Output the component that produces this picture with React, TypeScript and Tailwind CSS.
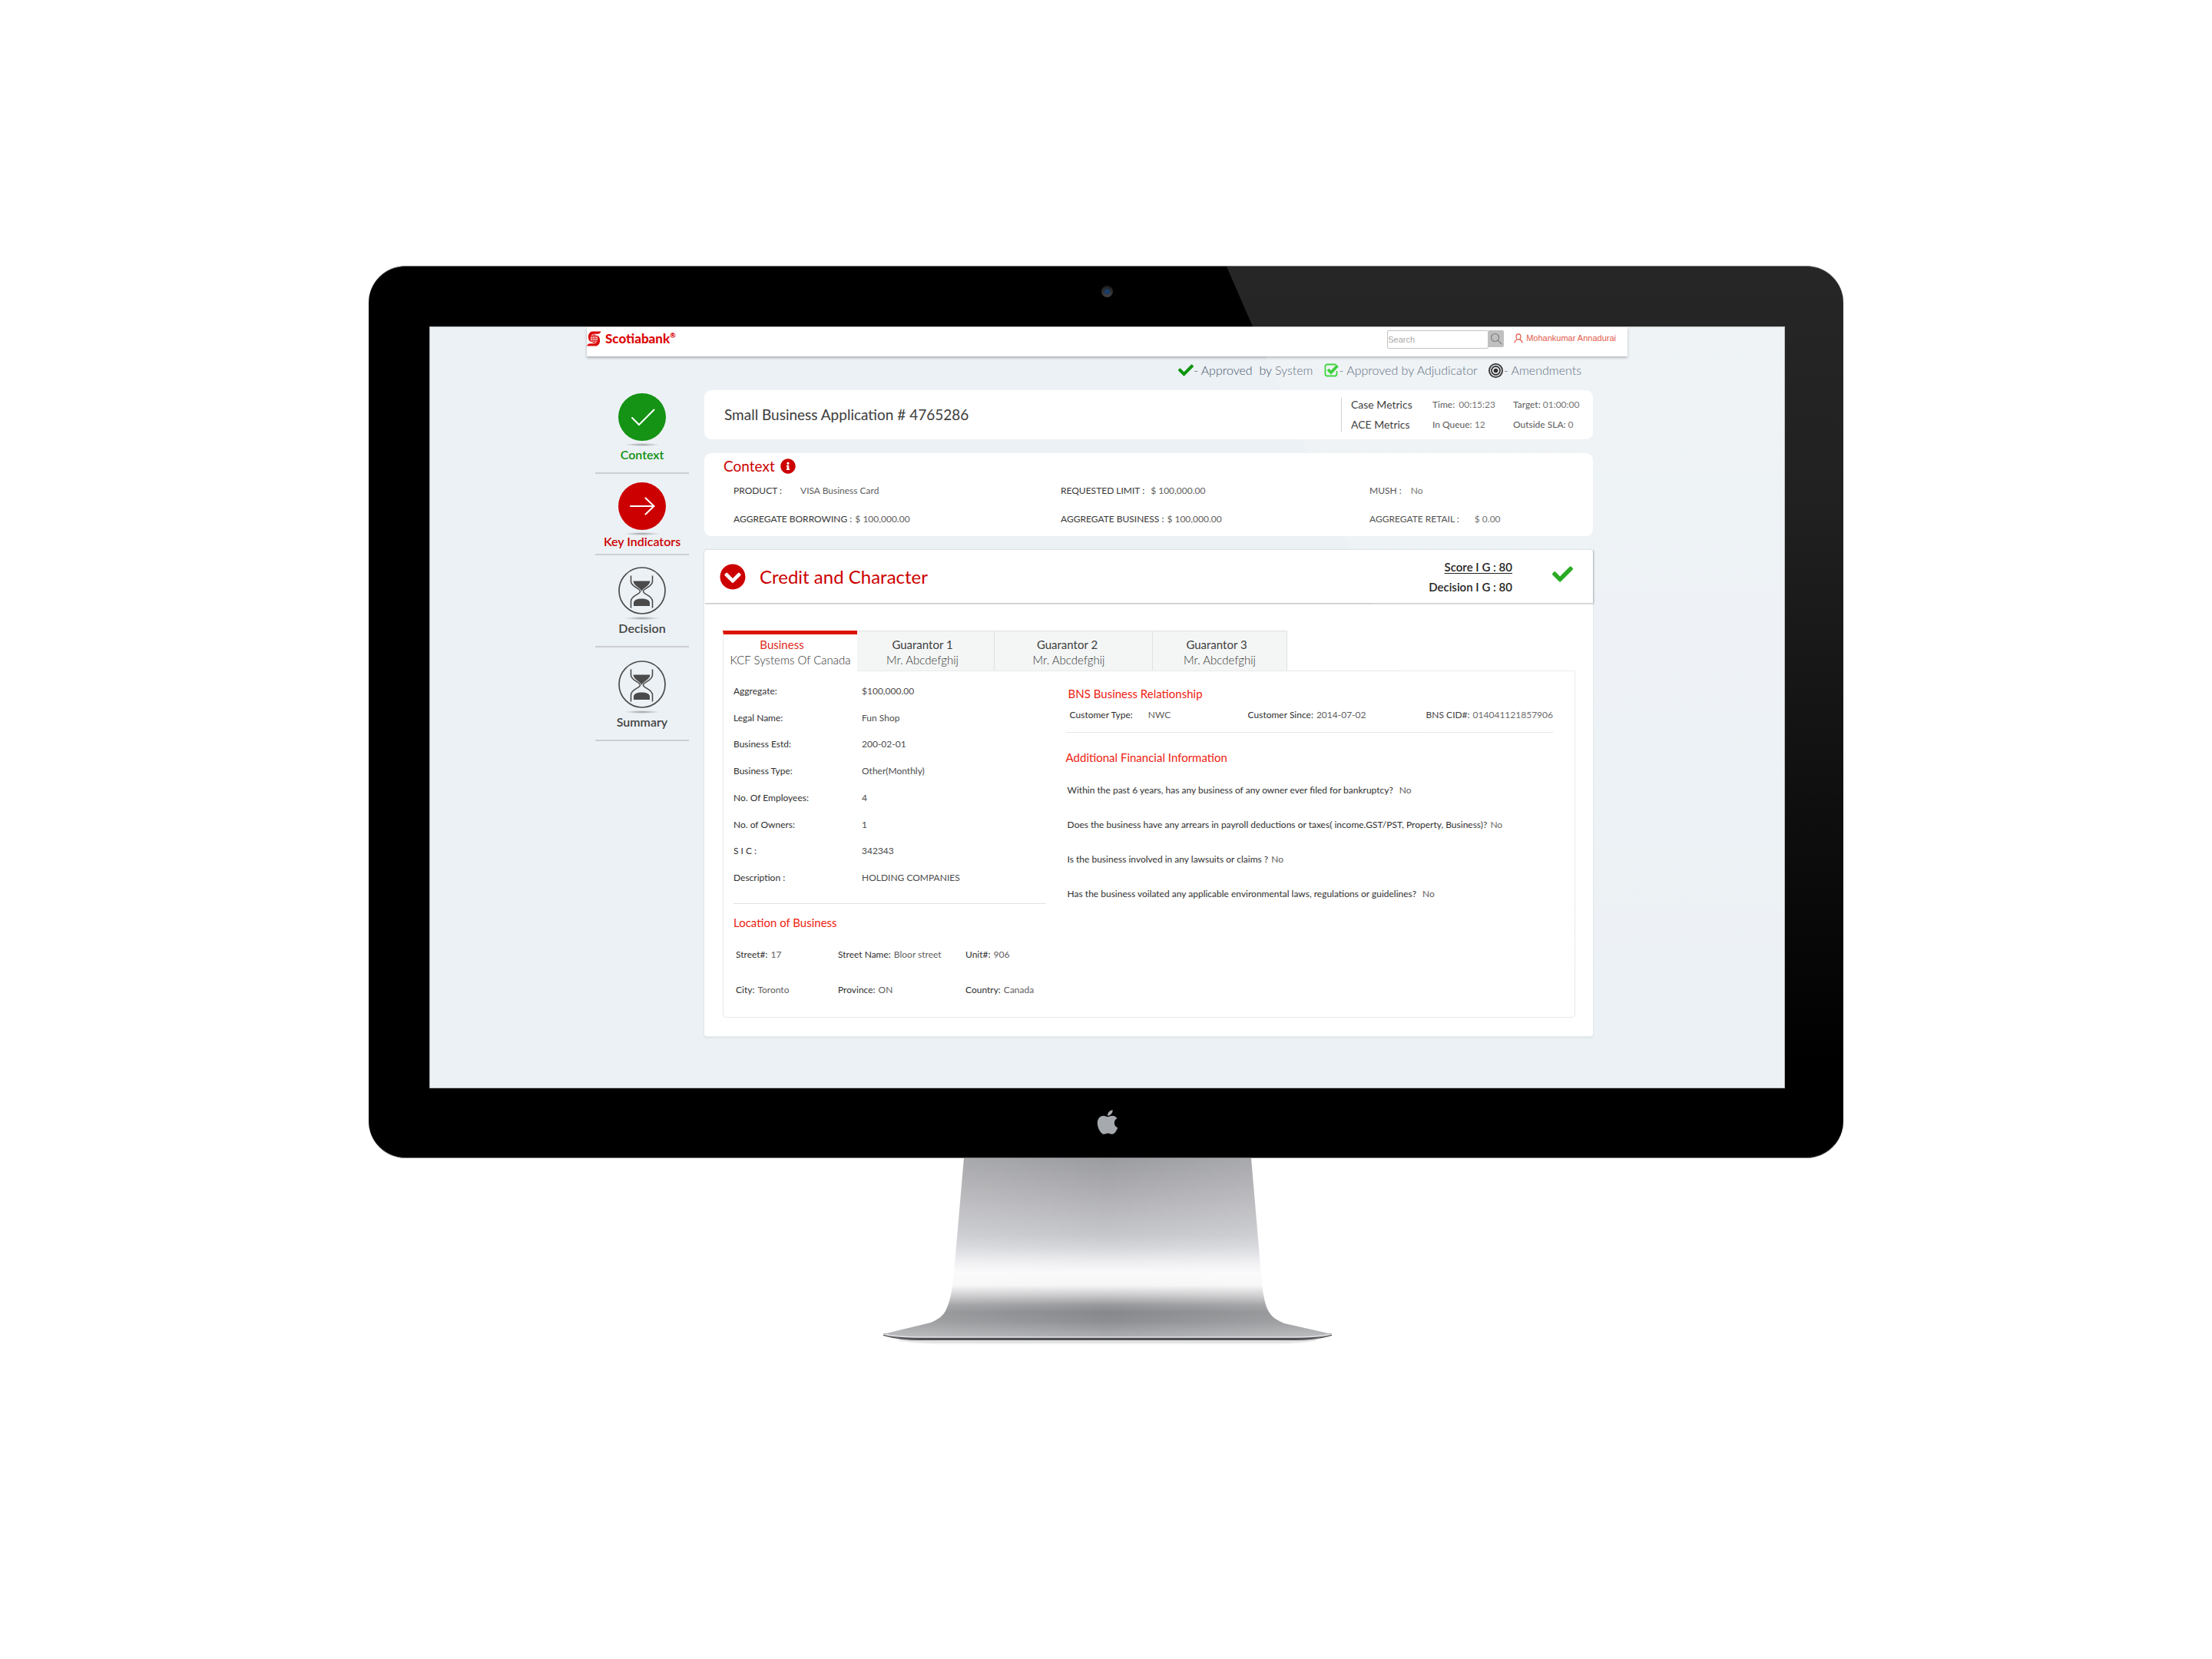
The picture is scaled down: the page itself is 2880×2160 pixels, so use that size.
import type { ReactNode } from "react";
import { FaApple, FaCheck, FaInfoCircle, FaChevronCircleDown } from "react-icons/fa";

type Pair = { label: string; value: string; gap?: string };

const applicationFacts: Pair[] = [
  { label: "PRODUCT :", value: "VISA Business Card", gap: "gap-6" },
  { label: "REQUESTED LIMIT :", value: "$ 100,000.00", gap: "gap-2" },
  { label: "MUSH :", value: "No", gap: "gap-3" },
  { label: "AGGREGATE BORROWING :", value: "$ 100,000.00", gap: "gap-1" },
  { label: "AGGREGATE BUSINESS :", value: "$ 100,000.00", gap: "gap-1" },
  { label: "AGGREGATE RETAIL :", value: "$ 0.00", gap: "gap-5" },
];

const businessFacts: Pair[] = [
  { label: "Aggregate:", value: "$100,000.00" },
  { label: "Legal Name:", value: "Fun Shop" },
  { label: "Business Estd:", value: "200-02-01" },
  { label: "Business Type:", value: "Other(Monthly)" },
  { label: "No. Of Employees:", value: "4" },
  { label: "No. of Owners:", value: "1" },
  { label: "S I C :", value: "342343" },
  { label: "Description :", value: "HOLDING COMPANIES" },
];

const locationFacts: Pair[] = [
  { label: "Street#:", value: "17" },
  { label: "Street Name:", value: "Bloor street" },
  { label: "Unit#:", value: "906" },
  { label: "City:", value: "Toronto" },
  { label: "Province:", value: "ON" },
  { label: "Country:", value: "Canada" },
];

const relationshipFacts: Pair[] = [
  { label: "Customer Type:", value: "NWC", gap: "gap-5" },
  { label: "Customer Since:", value: "2014-07-02", gap: "gap-1" },
  { label: "BNS CID#:", value: "014041121857906", gap: "gap-1" },
];

const questions: Pair[] = [
  { label: "Within the past 6 years, has any business of any owner ever filed for bankruptcy?", value: "No", gap: "gap-2" },
  { label: "Does the business have any arrears in payroll deductions or taxes( income.GST/PST, Property, Business)?", value: "No", gap: "gap-1" },
  { label: "Is the business involved in any lawsuits or claims ?", value: "No", gap: "gap-1" },
  { label: "Has the business voilated any applicable environmental laws, regulations or guidelines?", value: "No", gap: "gap-2" },
];

const tabs = [
  { title: "Business", name: "KCF Systems Of Canada", width: "w-[175px]", titleInset: "pr-[22px]" },
  { title: "Guarantor 1", name: "Mr. Abcdefghij", width: "w-[179px] pr-2", titleInset: "" },
  { title: "Guarantor 2", name: "Mr. Abcdefghij", width: "w-[206px] pr-3", titleInset: "pr-1" },
  { title: "Guarantor 3", name: "Mr. Abcdefghij", width: "w-[175px]", titleInset: "pr-2" },
];

function Fact({ label, value, gap = "gap-1" }: Pair) {
  return (
    <div className={`flex whitespace-nowrap ${gap}`}>
      <dt>{label}</dt>
      <dd className="text-[#5e5e5e]">{value}</dd>
    </div>
  );
}

function BrandMark() {
  return (
    <svg viewBox="0 0 40 42" className="h-5 w-[19px]" aria-hidden="true">
      <path d="M16 1 H39 C37 6 34 8 30 8 H19 C14 9 11 13 10 18 C9 23 10 27 13 30 C7 28 4 23 4 16 C4 8 9 1 16 1Z" fill="#dc0a0a" />
      <path d="M24 41 H0 C2 36 5 34 9 34 H21 C26 33 29 29 30 24 C31 18 30 14 27 11 C33 13 36 18 36 26 C36 34 31 41 24 41Z" fill="#dc0a0a" />
      <g fill="none" stroke="#dc0a0a" strokeWidth="1.8">
        <circle cx="20" cy="21" r="10.5" />
        <ellipse cx="20" cy="21" rx="5" ry="10.5" />
        <path d="M20 10V32M9.500 21H30.500M11 15.500H29M11 26.500H29" />
      </g>
    </svg>
  );
}

function Hourglass() {
  return (
    <svg viewBox="0 0 62 62" className="size-[62px]" aria-hidden="true">
      <circle cx="31" cy="31" r="30" fill="none" stroke="#4b4b4b" strokeWidth="1.7" />
      <g fill="none" stroke="#4b4b4b" strokeWidth="1.6">
        <path d="M16.500 11.500V19C16.500 26 28.500 28 28.500 32C28.500 36 16.500 37 16.500 45V53.500" />
        <path d="M44.500 11.500V19C44.500 26 32.500 28 32.500 32C32.500 36 44.500 37 44.500 45V53.500" />
      </g>
      <path d="M19.500 18.500H41.500C41 25 32.500 27 30.500 32C28.500 27 20 25 19.500 18.500Z" fill="#4b4b4b" />
      <path d="M20 51V47C20 43 25 41.500 30.500 41.500C36 41.500 41 43 41 47V51Z" fill="#4b4b4b" />
    </svg>
  );
}

function StepDisc({ color, children }: { color: string; children: ReactNode }) {
  return (
    <svg viewBox="0 0 62 62" className="size-[62px]" fill="none" stroke="#fff" strokeWidth="2" strokeLinecap="round" aria-hidden="true">
      <circle cx="31" cy="31" r="31" fill={color} stroke="none" />
      {children}
    </svg>
  );
}

const steps = [
  {
    name: "Context",
    tone: "text-[#109010]",
    spacing: "pb-[13px]",
    labelGap: "mt-2",
    icon: <StepDisc color="#149314"><path d="M18 32L27 41L46.500 21.500" /></StepDisc>,
  },
  {
    name: "Key Indicators",
    tone: "text-[#cc0000]",
    spacing: "pt-[11px] pb-1.5",
    labelGap: "mt-[5px]",
    icon: <StepDisc color="#cc0000"><path d="M16 31H46M35.500 20.500L46.500 31L35.500 41.500" /></StepDisc>,
  },
  { name: "Decision", tone: "text-[#444]", spacing: "pt-[15px] pb-[13px]", labelGap: "mt-2", icon: <Hourglass /> },
  { name: "Summary", tone: "text-[#444]", spacing: "pt-[17px] pb-[13px]", labelGap: "mt-2", icon: <Hourglass /> },
];

function Sidebar() {
  return (
    <nav aria-label="Steps" className="w-[122px] shrink-0 pt-12">
      {steps.map((s) => (
        <a key={s.name} href="#" className={`flex flex-col items-center border-b-2 border-[#cdcfd1] ${s.spacing} ${s.tone}`}>
          <span className="relative flex">
            {s.icon}
            <span className="absolute inset-x-2 top-full mt-[3px] h-1 rounded-full bg-[radial-gradient(closest-side,#9a9ea2,transparent)]" />
          </span>
          <span className={`text-base leading-5 font-semibold ${s.labelGap}`}>{s.name}</span>
        </a>
      ))}
    </nav>
  );
}

function TopBar() {
  return (
    <header className="relative flex h-[38px] items-start justify-between bg-white pr-[15px] shadow-[0_2px_3px_rgba(90,95,105,0.45)]">
      <a href="#" className="flex items-center gap-[5px] pt-[5px] text-[17px] leading-5 font-black text-[#dc0a0a]">
        <BrandMark />
        <span className="flex">
          Scotiabank<span className="text-[9px] leading-3">®</span>
        </span>
      </a>
      <div className="flex items-start pt-1 font-['Liberation_Sans',sans-serif] text-[11px]">
        <input
          type="search"
          aria-label="Search"
          placeholder="Search"
          className="h-6 w-[132px] rounded-[2px] border border-[#b9b9b9] bg-white placeholder:text-[#999]"
        />
        <button type="button" aria-label="Search" className="flex h-[22px] w-5 items-center justify-center rounded-r-[2px] bg-[#b5b5b5]">
          <svg viewBox="0 0 16 16" className="size-4" fill="none" stroke="#6c6c6c" strokeWidth="1.2" aria-hidden="true">
            <circle cx="6.500" cy="6.500" r="5" />
            <path d="M10.200 10.200L15 15" />
          </svg>
        </button>
        <a href="#" className="ml-[13px] flex items-center gap-1 text-[#dd3d2a]">
          <svg viewBox="0 0 12 13" className="h-[13px] w-3" fill="none" stroke="#dd3d2a" strokeWidth="1.2" aria-hidden="true">
            <ellipse cx="6" cy="4.500" rx="3" ry="3.700" />
            <path d="M1 12.500C1 10 2.500 8.800 4.400 8M11 12.500C11 10 9.500 8.800 7.600 8" />
          </svg>
          <span className="leading-5">Mohankumar Annadurai</span>
        </a>
      </div>
    </header>
  );
}

function Legend() {
  return (
    <ul className="mb-2 flex h-[36px] items-center justify-end gap-3.5 pr-[15px] text-base font-light whitespace-pre text-[#46546a]">
      <li className="flex items-center">
        <FaCheck className="size-5 text-[#0e960e]" aria-hidden="true" />
        {"- Approved  by System"}
      </li>
      <li className="flex items-center">
        <svg viewBox="0 0 20 18" className="h-[18px] w-5" fill="none" aria-hidden="true">
          <path d="M15.500 1.500H4A2.500 2.500 0 0 0 1.500 4V14A2.500 2.500 0 0 0 4 16.500H14A2.500 2.500 0 0 0 16.500 14V10" stroke="#1fd01f" strokeWidth="1.8" />
          <path d="M5 8L9 12L17.500 3" stroke="#1fc81f" strokeWidth="3.800" />
        </svg>
        - Approved by Adjudicator
      </li>
      <li className="flex items-center gap-px">
        <svg viewBox="0 0 20 20" className="size-[19px]" fill="none" stroke="#111" strokeWidth="1.900" aria-hidden="true">
          <circle cx="10" cy="10" r="9" />
          <circle cx="10" cy="10" r="5.800" />
          <circle cx="10" cy="10" r="3" fill="#111" stroke="none" />
        </svg>
        - Amendments
      </li>
    </ul>
  );
}

function ApplicationCard() {
  return (
    <section className="flex h-16 items-center justify-between rounded-[9px] bg-white pl-[26px]">
      <h1 className="text-[19px] text-[#3c3c3c]">Small Business Application # 4765286</h1>
      <div className="flex items-center">
        <div className="h-11 w-px bg-[#cacaca]" />
        <div className="grid grid-cols-[106px_105px_104px] pl-3 text-xs/[26px] whitespace-nowrap text-[#404040]">
          <h2 className="text-sm/[26px] text-[#222]">Case Metrics</h2>
          <p>Time: <span className="ml-0.5 text-[#5e5e5e]">00:15:23</span></p>
          <p>Target: <span className="text-[#5e5e5e]">01:00:00</span></p>
          <h2 className="text-sm/[26px] text-[#222]">ACE Metrics</h2>
          <p>In Queue: <span className="text-[#5e5e5e]">12</span></p>
          <p>Outside SLA: <span className="text-[#5e5e5e]">0</span></p>
        </div>
      </div>
    </section>
  );
}

function ContextCard() {
  return (
    <section className="mt-[18px] rounded-[9px] bg-white pt-[5px] pb-3">
      <h2 className="flex items-center gap-[7px] pl-[25px] text-[19px] leading-6 text-[#cc0000]">
        Context
        <FaInfoCircle className="size-5" aria-hidden="true" />
      </h2>
      <dl className="mt-2.5 grid grid-cols-[426fr_402fr_291fr] gap-y-[17px] pl-[38px] text-xs leading-5 text-[#383838]">
        {applicationFacts.map((f) => (
          <Fact key={f.label} {...f} />
        ))}
      </dl>
    </section>
  );
}

function CreditCard() {
  return (
    <section className="mt-[18px] rounded-sm border-b-2 border-[#e2ebec] bg-white shadow-[0_0_2px_rgba(120,140,150,0.35)]">
      <header className="flex h-[69px] items-center gap-[18px] pr-[26px] pl-5 shadow-[1px_1px_2px_rgba(90,95,100,0.5)]">
        <button type="button" aria-label="Collapse section" className="flex text-[#cc0000]">
          <FaChevronCircleDown className="size-[34px]" aria-hidden="true" />
        </button>
        <h2 className="text-2xl text-[#cc0000]">Credit and Character</h2>
        <div className="ml-auto text-right text-[15px] leading-[26px] font-semibold text-[#060606]">
          <p><a href="#" className="underline underline-offset-2">Score I G : 80</a></p>
          <p>Decision I G : 80</p>
        </div>
        <FaCheck className="mb-1.5 ml-[34px] size-[27px] text-[#0fa008]" aria-label="Approved by System" />
      </header>

      <div className="pt-9 pr-[23px] pb-6 pl-6">
        <div role="tablist" aria-label="Parties" className="relative flex">
          {tabs.map((t, i) => (
            <button
              key={t.title}
              type="button"
              role="tab"
              aria-selected={i === 0}
              className={
                i === 0
                  ? `-mb-px h-[53px] border-t-[5px] border-l border-t-[#dc1400] border-l-[#eaeaea] bg-white pb-0.5 text-[15px] leading-5 ${t.width}`
                  : `h-[52px] border-t border-r border-[#dfe1e1] bg-[#f4f6f6] pt-[3px] text-[15px] leading-5 ${t.width}`
              }
            >
              <span className={i === 0 ? `block text-[#e02a1c] ${t.titleInset}` : `block text-[#404040] ${t.titleInset}`}>{t.title}</span>
              <span className="block font-light text-[#333]">{t.name}</span>
            </button>
          ))}
        </div>

        <div role="tabpanel" className="grid grid-cols-[407fr_635fr] gap-[26px] rounded-b-sm border border-[#e9e9e9] pr-7 pb-[25px] pl-[13px] text-xs leading-5 text-[#303030]">
          <div className="pt-4">
            <dl className="flex h-[263px] flex-col justify-between">
              {businessFacts.map((f) => (
                <div key={f.label} className="grid grid-cols-[167px_1fr]">
                  <dt>{f.label}</dt>
                  <dd className="text-[#4c4c4c]">{f.value}</dd>
                </div>
              ))}
            </dl>
            <hr className="mt-[23px] border-[#e2e2e2]" />
            <h3 className="mt-3.5 text-[15px] leading-5 text-[#ee1c10]">Location of Business</h3>
            <dl className="mt-[22px] grid grid-cols-[133px_166px_1fr] gap-y-[26px] pl-[3px]">
              {locationFacts.map((f) => (
                <Fact key={f.label} {...f} />
              ))}
            </dl>
          </div>

          <div className="pt-[19px]">
            <h3 className="pl-[3px] text-[15px] leading-5 text-[#ee1c10]">BNS Business Relationship</h3>
            <dl className="mt-2 grid grid-cols-[232fr_232fr_165fr] pl-[5px]">
              {relationshipFacts.map((f) => (
                <Fact key={f.label} {...f} />
              ))}
            </dl>
            <hr className="mt-3 border-[#e6e6e6]" />
            <h3 className="mt-[22px] text-[15px] leading-5 text-[#ee1c10]">Additional Financial Information</h3>
            <dl className="mt-[23px] grid gap-[25px] pl-0.5">
              {questions.map((f) => (
                <Fact key={f.label} {...f} />
              ))}
            </dl>
          </div>
        </div>
      </div>
    </section>
  );
}

function Stand() {
  return (
    <svg viewBox="0 0 584 244" className="ml-[3px] w-[584px]" aria-hidden="true">
      <defs>
        <linearGradient id="metal" x1="0" y1="0" x2="0" y2="1">
          <stop offset="0" stopColor="#9b9ca0" />
          <stop offset=".16" stopColor="#ababaf" />
          <stop offset=".43" stopColor="#c6c7cb" />
          <stop offset=".5" stopColor="#d5d6da" />
          <stop offset=".58" stopColor="#ededf0" />
          <stop offset=".64" stopColor="#fafafb" />
          <stop offset=".71" stopColor="#f6f6f7" />
          <stop offset=".77" stopColor="#c6c6c8" />
          <stop offset=".82" stopColor="#98999c" />
          <stop offset=".86" stopColor="#87888b" />
          <stop offset=".91" stopColor="#8d8e91" />
          <stop offset="1" stopColor="#adaeb1" />
        </linearGradient>
        <linearGradient id="side" x1="0" y1="0" x2="1" y2="0">
          <stop offset="0" stopColor="#fff" stopOpacity=".2" />
          <stop offset=".5" stopColor="#fff" stopOpacity="0" />
          <stop offset="1" stopColor="#fff" stopOpacity=".2" />
        </linearGradient>
        <filter id="soft" x="-5%" y="-200%" width="110%" height="500%">
          <feGaussianBlur stdDeviation="1.500" />
        </filter>
      </defs>
      <path d="M20 235Q40 239 80 239H504Q544 239 564 235" fill="none" stroke="#777" strokeOpacity=".5" strokeWidth="2" filter="url(#soft)" />
      <path d="M0 228V231Q20 237 50 237H534Q564 237 584 231V228Z" fill="#4e4f52" />
      <path d="M0 228Q14 235 50 236H534Q570 235 584 228V229Q570 235.500 534 236H50Q14 235.500 0 229Z" fill="#8a8b8e" />
      <path d="M105 0H479L491 140C493 170 496 190 502 200C507 208 513 211 522 215L584 229Q566 233 534 233H50Q18 233 0 229L62 214C71 210 77 206 81 199C87 187 90 172 92 150Z" fill="url(#metal)" />
      <path d="M105 0H479L491 140C493 170 496 190 502 200C507 208 513 211 522 215L584 229Q566 233 534 233H50Q18 233 0 229L62 214C71 210 77 206 81 199C87 187 90 172 92 150Z" fill="url(#side)" />
      <path d="M0 229Q18 233 50 233H534Q566 233 584 229" fill="none" stroke="#e4e4e6" strokeWidth="1.500" />
    </svg>
  );
}

export default function App() {
  return (
    <div className="flex min-h-screen flex-col items-center bg-white pt-[346px] font-['Lato',sans-serif]">
      <div className="relative w-2/3 overflow-hidden rounded-[48px] border-t border-b border-[#777] bg-black pr-[76px] pl-[79px]">
        <div className="flex h-[78px] items-center justify-center">
          <div className="mb-3.5 flex size-[15px] items-center justify-center rounded-full bg-linear-to-b from-[#1c1c1e] to-[#444448]">
            <div className="size-[7px] rounded-full bg-[#1b3c68]" />
          </div>
        </div>

        <div className="border border-[#b4b6b8] bg-[#ecf1f5] px-[204px] pb-[65px]">
          <TopBar />
          <div className="flex gap-5 pr-[45px] pl-[11px]">
            <Sidebar />
            <main className="min-w-0 flex-1">
              <Legend />
              <ApplicationCard />
              <ContextCard />
              <CreditCard />
            </main>
          </div>
        </div>

        <div className="flex h-[90px] items-center justify-center pb-0.5">
          <FaApple className="size-[36px] text-[#a6a9ad]" aria-hidden="true" />
        </div>

        <svg viewBox="0 0 1920 1161" preserveAspectRatio="none" className="pointer-events-none absolute inset-0 size-full" aria-hidden="true">
          <defs>
            <linearGradient id="gloss" x1="0" y1="0" x2="0" y2="1">
              <stop offset="0" stopColor="#fff" stopOpacity=".15" />
              <stop offset=".25" stopColor="#fff" stopOpacity=".13" />
              <stop offset=".9" stopColor="#fff" stopOpacity="0" />
            </linearGradient>
          </defs>
          <path d="M1117 0H1920V1161H1622Z" fill="url(#gloss)" />
        </svg>
      </div>
      <Stand />
    </div>
  );
}
